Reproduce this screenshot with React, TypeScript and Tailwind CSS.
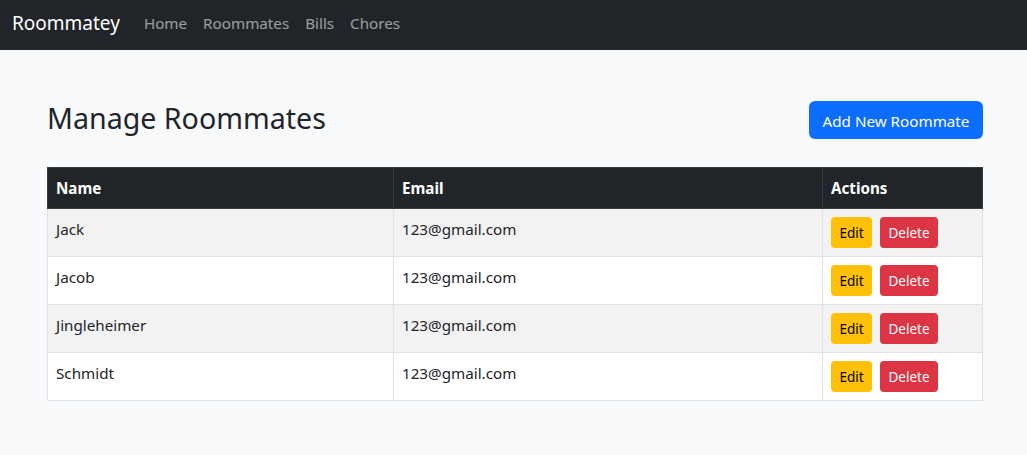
const roommates = [
  { name: 'Jack', email: '123@gmail.com' },
  { name: 'Jacob', email: '123@gmail.com' },
  { name: 'Jingleheimer', email: '123@gmail.com' },
  { name: 'Schmidt', email: '123@gmail.com' },
];

export default function App() {
  return (
    <div className="min-h-[455px] bg-[#f8f9fa] font-['Noto_Sans',sans-serif] text-[#212529]">
      <nav className="flex h-[50px] items-center bg-[#212529] px-3 pb-[3px]">
        <span className="mr-4 text-[19px] text-white">Roommatey</span>
        <div className="flex text-[15.2px] text-white/55">
          <span className="px-2">Home</span>
          <span className="px-2">Roommates</span>
          <span className="px-2">Bills</span>
          <span className="px-2">Chores</span>
        </div>
      </nav>

      <div className="ml-[47px] w-[936px] pt-[50px]">
        <div className="flex h-[39px] items-center justify-between">
          <h2 className="pb-[2px] text-[28.6px] leading-[1.2] font-normal">Manage Roommates</h2>
          <button className="h-[38px] w-[174px] rounded-md bg-[#0d6efd] pt-[3px] text-[15.2px] text-white">
            Add New Roommate
          </button>
        </div>

        <table className="mt-[28px] w-full border-collapse text-[15.2px]">
          <thead>
            <tr className="bg-[#212529] text-white">
              <th className="w-[346px] border border-[#373b3e] px-2 py-2 text-left font-bold leading-6">Name</th>
              <th className="w-[429px] border border-[#373b3e] px-2 py-2 text-left font-bold leading-6">Email</th>
              <th className="border border-[#373b3e] px-2 py-2 text-left font-bold leading-6">Actions</th>
            </tr>
          </thead>
          <tbody>
            {roommates.map((r, i) => (
              <tr key={r.name} className={i % 2 === 0 ? 'bg-[#f2f2f2]' : 'bg-white'}>
                <td className="h-[48px] border border-[#dee2e6] px-2 py-2 align-top leading-6">{r.name}</td>
                <td className="border border-[#dee2e6] px-2 py-2 align-top leading-6">{r.email}</td>
                <td className="border border-[#dee2e6] px-2 py-2 align-top">
                  <div className="flex gap-2">
                    <button className="h-[31px] w-[41px] rounded bg-[#ffc107] pt-[2px] text-[13.5px] text-black">Edit</button>
                    <button className="h-[31px] w-[58px] rounded bg-[#dc3545] pt-[2px] text-[13.5px] text-white">Delete</button>
                  </div>
                </td>
              </tr>
            ))}
          </tbody>
        </table>
      </div>
    </div>
  );
}
